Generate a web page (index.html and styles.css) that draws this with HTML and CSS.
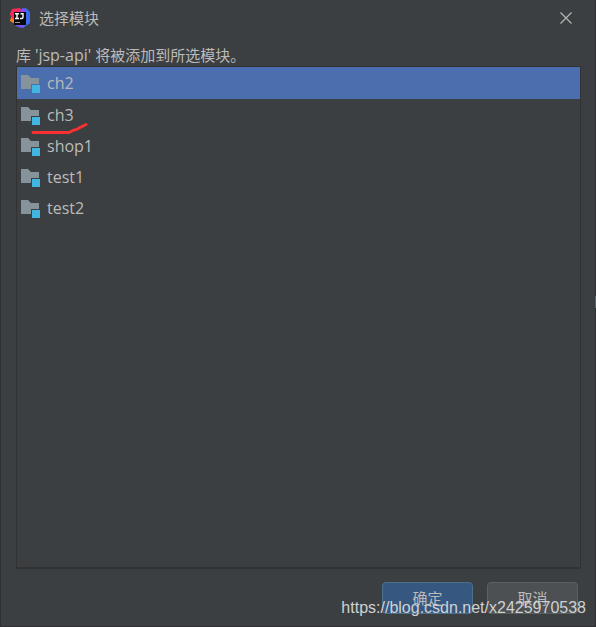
FILE: index.html
```html
<!DOCTYPE html>
<html lang="zh-CN">
<head>
<meta charset="utf-8">
<title>选择模块</title>
<link rel="stylesheet" href="styles.css">
</head>
<body>
<svg class="defs" aria-hidden="true">
  <symbol id="module" viewBox="0 0 20 18">
    <path fill="#87939a" d="M0 0h7l3 3h8v6h-8v5H0z"/>
    <path fill="#40b6e0" d="M11 10h8v8h-8z"/>
  </symbol>
</svg>
<main class="dialog">
  <header class="titlebar">
    <svg class="logo" viewBox="0 0 20 20" aria-hidden="true">
      <path fill="#fc801d" d="M1 9l5-2 2 8-3 1-5-3z"/>
      <path fill="#fe2857" d="M2 1l8-1 2 5-6 5-4 1-2-5z"/>
      <path fill="#3b6cf0" d="M12 1l4-1 4 4v11l-7 5-5-1V8z"/>
      <path fill="#9b43e8" d="M10 2l3-2 3 4-3 2-4-2z"/>
      <path fill="#7b55ee" d="M4 16h11l-2 4-7-2z"/>
      <path fill="#090909" d="M4 4h12v13H4z"/>
      <path fill="none" stroke="#fff" stroke-width="1.4" d="M5 5.700h4M7 6v5M5 10.500h4M10.500 5.700H13v3.500q0 1.300-1.300 1.300H10"/>
      <path fill="#999" d="M5 14h5v1H5z"/>
    </svg>
    <h1 class="title">选择模块</h1>
    <button class="close" type="button" aria-label="关闭">
      <svg viewBox="0 0 12 12" aria-hidden="true"><path fill="none" stroke="#b4b6b7" stroke-width="1.2" d="M.5.5l11 11M11.500.5l-11 11"/></svg>
    </button>
  </header>
  <p class="message" id="message">库 <span class="library">'jsp-api'</span> 将被添加到所选模块。</p>
  <ul class="modules" role="listbox" aria-labelledby="message">
    <li class="module selected" role="option" aria-selected="true"><svg class="icon"><use href="#module"/></svg>ch2</li>
    <li class="module" role="option" aria-selected="false"><svg class="icon"><use href="#module"/></svg>ch3
      <svg class="mark" viewBox="0 0 58 14" aria-hidden="true"><path d="M2 10.500h36l5-2.500q3 0 5-2l7-3.500"/></svg>
    </li>
    <li class="module" role="option" aria-selected="false"><svg class="icon"><use href="#module"/></svg>shop1</li>
    <li class="module" role="option" aria-selected="false"><svg class="icon"><use href="#module"/></svg>test1</li>
    <li class="module" role="option" aria-selected="false"><svg class="icon"><use href="#module"/></svg>test2</li>
  </ul>
  <footer class="actions">
    <button class="button primary" type="button">确定</button>
    <button class="button" type="button">取消</button>
  </footer>
  <span class="watermark">https://blog.csdn.net/x2425970538</span>
  <span class="edge"></span>
</main>
</body>
</html>
```
FILE: styles.css
```css
* {
  box-sizing: border-box;
}

body {
  margin: 0;
  background: #3c3f41;
  color: #bbbbbb;
  font: 15px/20px "Open Sans", "Noto Sans CJK SC", sans-serif;
}

.defs {
  position: absolute;
  width: 0;
  height: 0;
}

.dialog {
  position: relative;
  display: flex;
  flex-direction: column;
  min-height: 100vh;
  border: 1px solid #2f3033;
  border-top: 0;
}

.titlebar {
  display: flex;
  align-items: center;
  gap: 9px;
  height: 36px;
  padding: 0 16px 0 9px;
}

.logo {
  width: 20px;
  height: 20px;
}

.title {
  flex: 1;
  margin: 0;
  font-size: 15px;
  font-weight: 400;
}

.close {
  display: grid;
  place-items: center;
  width: 26px;
  height: 26px;
  padding: 0;
  border: 0;
  background: none;
}

.close svg {
  width: 12px;
  height: 12px;
}

.message {
  margin: 9px 15px 1px;
}

.library {
  font-size: 16px;
}

.modules {
  flex: 1;
  margin: 0 14px 0 15px;
  padding: 0;
  border: 1px solid #323232;
  border-bottom-width: 2px;
  list-style: none;
}

.module {
  position: relative;
  display: flex;
  align-items: center;
  gap: 6px;
  height: 31px;
  padding-left: 4px;
  font-size: 16px;
}

.module.selected {
  height: 32px;
  background: #4b6eaf;
}

.icon {
  width: 20px;
  height: 18px;
  margin-top: 2px;
}

.mark {
  position: absolute;
  top: 23px;
  left: 14px;
  z-index: 1;
  width: 58px;
  height: 14px;
  fill: none;
  stroke: #fb3030;
  stroke-width: 3;
  stroke-linecap: round;
  stroke-linejoin: round;
}

.actions {
  display: flex;
  justify-content: flex-end;
  gap: 14px;
  padding: 13px 17px 12px;
}

.button {
  width: 91px;
  height: 32px;
  padding: 0;
  border: 1px solid #5e6060;
  border-radius: 4px;
  background: #4c5052;
  color: #bbbbbb;
  font: inherit;
}

.button.primary {
  border-color: #4c708c;
  background: #365880;
}

.watermark {
  position: absolute;
  right: 9px;
  bottom: 8px;
  color: #d0d1d2;
  font: 16px/20px "Liberation Sans", Arial, sans-serif;
  pointer-events: none;
}

.edge {
  position: absolute;
  top: 296px;
  right: -1px;
  width: 1px;
  height: 12px;
  background: #53646d;
}
```
